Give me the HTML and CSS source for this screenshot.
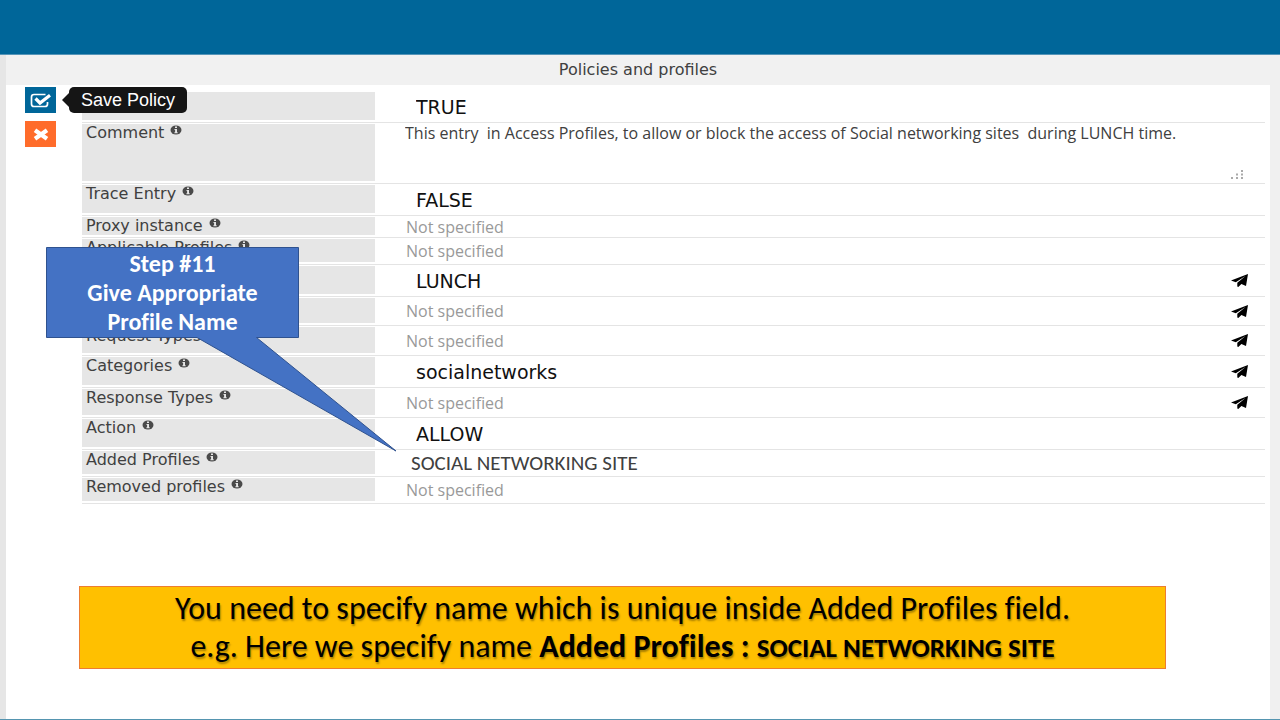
FILE: index.html
```html
<!DOCTYPE html>
<html lang="en">
<head>
<meta charset="utf-8">
<title>Policies and profiles</title>
<link rel="stylesheet" href="styles.css">
</head>
<body>
<svg class="defs" aria-hidden="true">
  <symbol id="info" viewBox="0 0 12 10"><ellipse cx="6" cy="5" rx="5.5" ry="4.6" fill="#4a4a4a"/><path d="M5 1.5h2v1.6H5zM4.5 4H7v3.2h.7v1H4.4v-1h.7V5h-.6z" fill="#e6e6e6"/></symbol>
  <symbol id="plane" viewBox="0 0 17 13"><path d="M17 0 15 12 10.400 10 7.300 13 6.300 12.500V8.800L14.500 2 4.800 8.300 0 6.600Z" fill="#000"/></symbol>
</svg>
<header class="topbar"></header>
<div class="frame">
  <h1 class="title">Policies and profiles</h1>
  <main class="panel">
    <div class="actions">
      <div class="save-wrap">
        <button class="action save" type="button" aria-label="Save Policy" aria-describedby="tip">
          <svg width="22" height="15" viewBox="0 0 22 15"><path d="M15.500 1.500H4Q1.500 1.500 1.500 4v7q0 2.500 2.500 2.500h11q2.500 0 2.500-2.500V9" fill="none" stroke="#fff" stroke-width="1.700"/><path d="m5.500 5.500 4.500 4.500L20 2.300" fill="none" stroke="#fff" stroke-width="3.200"/></svg>
        </button>
        <span class="tooltip" role="tooltip" id="tip">Save Policy</span>
      </div>
      <button class="action cancel" type="button" aria-label="Cancel">
        <svg width="16" height="13" viewBox="0 0 16 13"><path d="m2 2.200 12 8.600M14 2.200 2 10.800" stroke="#fff" stroke-width="4.200"/></svg>
      </button>
    </div>
    <form class="rows">
      <div class="row h32"><label class="label" for="enabled"></label><input class="value" id="enabled" aria-label="Enabled" value="TRUE"></div>
      <div class="row h61"><label class="label" for="comment">Comment <svg class="info"><use href="#info"/></svg></label><textarea class="comment" id="comment">This entry  in Access Profiles, to allow or block the access of Social networking sites  during LUNCH time.</textarea>
        <svg class="grip" width="12" height="10" viewBox="0 0 12 10"><path d="M0 7h2v2H0zM5 7h2v2H5zM10 7h2v2h-2zM5 3.500h2v2H5zM10 3.500h2v2h-2zM10 0h2v2h-2z" fill="#aaa"/></svg></div>
      <div class="row h32"><label class="label" for="trace">Trace Entry <svg class="info"><use href="#info"/></svg></label><input class="value" id="trace" value="FALSE"></div>
      <div class="row h22"><label class="label" for="proxy">Proxy instance <svg class="info"><use href="#info"/></svg></label><input class="value empty" id="proxy" placeholder="Not specified"></div>
      <div class="row h27"><label class="label" for="applicable">Applicable Profiles <svg class="info"><use href="#info"/></svg></label><input class="value empty" id="applicable" placeholder="Not specified"></div>
      <div class="row h32"><label class="label" for="time"></label><input class="value" id="time" aria-label="Time profile" value="LUNCH"><button class="go" type="button" aria-label="Open"><svg class="plane"><use href="#plane"/></svg></button></div>
      <div class="row h29"><label class="label" for="methods"></label><input class="value empty" id="methods" aria-label="Methods" placeholder="Not specified"><button class="go" type="button" aria-label="Open"><svg class="plane"><use href="#plane"/></svg></button></div>
      <div class="row h30"><label class="label" for="request">Request Types</label><input class="value empty" id="request" placeholder="Not specified"><button class="go" type="button" aria-label="Open"><svg class="plane"><use href="#plane"/></svg></button></div>
      <div class="row h32"><label class="label" for="categories">Categories <svg class="info"><use href="#info"/></svg></label><input class="value" id="categories" value="socialnetworks"><button class="go" type="button" aria-label="Open"><svg class="plane"><use href="#plane"/></svg></button></div>
      <div class="row h30"><label class="label" for="response">Response Types <svg class="info"><use href="#info"/></svg></label><input class="value empty" id="response" placeholder="Not specified"><button class="go" type="button" aria-label="Open"><svg class="plane"><use href="#plane"/></svg></button></div>
      <div class="row h32"><label class="label" for="action">Action <svg class="info"><use href="#info"/></svg></label><input class="value" id="action" value="ALLOW"></div>
      <div class="row h27"><label class="label" for="added">Added Profiles <svg class="info"><use href="#info"/></svg></label><input class="value added" id="added" value="SOCIAL NETWORKING SITE"></div>
      <div class="row h27"><label class="label" for="removed">Removed profiles <svg class="info"><use href="#info"/></svg></label><input class="value empty" id="removed" placeholder="Not specified"></div>
    </form>
    <aside class="callout">
      <svg class="tail" width="352" height="206" viewBox="0 0 352 206"><path d="M.5.5h252v90h-42L350 204 151 90.500H.5z" fill="#4472c4" stroke="#2f528f"/></svg>
      <p class="callout-text">Step #11<br>Give Appropriate<br>Profile Name</p>
    </aside>
  </main>
  <p class="note">You need to specify name which is unique inside Added Profiles field.<br>e.g. Here we specify name <b>Added Profiles : <span class="note-name">SOCIAL NETWORKING SITE</span></b></p>
</div>
</body>
</html>
```
FILE: styles.css
```css
* { box-sizing: border-box; }
body {
  margin: 0;
  min-height: 100vh;
  display: flex;
  flex-direction: column;
  background: #fff;
  color: #404040;
  font-family: "Open Sans", sans-serif;
  font-variant-ligatures: none;
  border-bottom: 1px solid #5595b0;
}
button, input, textarea { font: inherit; color: inherit; border: 0; padding: 0; margin: 0; background: none; }
.defs { position: absolute; width: 0; height: 0; }
.topbar { height: 55px; background: #006699; border-bottom: 1px solid #5595b8; }
.frame {
  flex: 1;
  border-left: 6px solid #e6e6e6;
  border-right: 10px solid #f0f0f0;
}
.title {
  margin: 0;
  background: #f1f1f1;
  font: 16px/30px "DejaVu Sans", sans-serif;
  text-align: center;
}
.panel {
  position: relative;
  display: flex;
  gap: 26px;
  padding: 2px 5px 0 19px;
}
.actions { display: flex; flex-direction: column; gap: 8px; width: 31px; }
.save-wrap { position: relative; height: 26px; }
.action { display: flex; align-items: center; justify-content: center; width: 31px; height: 26px; }
.save { background: #006699; }
.cancel { background: #ff6c2b; }
.tooltip {
  position: absolute;
  z-index: 2;
  left: 44px;
  top: 0;
  padding: 0 12px;
  border-radius: 5px;
  background: #151515;
  color: #fff;
  font: 18px/26px "Liberation Sans", sans-serif;
  white-space: nowrap;
}
.tooltip::before {
  content: "";
  position: absolute;
  left: -7px;
  top: 6px;
  border: 7px solid transparent;
  border-left: 0;
  border-right-color: #151515;
}
.rows { flex: 1; min-width: 0; padding-top: 4px; }
.row {
  display: grid;
  grid-template-columns: 293px 1fr 34px;
  column-gap: 30px;
  align-items: center;
  border-bottom: 1px solid #e4e4e4;
}
.h22 { min-height: 22px; }
.h27 { min-height: 27px; }
.h29 { min-height: 29px; }
.h30 { min-height: 30px; }
.h32 { min-height: 32px; }
.h61 { min-height: 61px; }
.label {
  align-self: stretch;
  margin: 1px 0 2px;
  padding-left: 4px;
  background: #e6e6e6;
  font: 16px/17px "DejaVu Sans", sans-serif;
}
.info { width: 12px; height: 10px; margin-left: 1px; vertical-align: 3px; }
.value {
  width: 100%;
  padding-left: 11px;
  color: #111;
  font: 19px/20px "DejaVu Sans", sans-serif;
}
.empty { padding-left: 1px; font: 16px/20px "Open Sans", sans-serif; }
.empty::placeholder { color: #999; }
.added { padding-left: 6px; color: #404040; font: 21px/22px Carlito, Lato, sans-serif; }
.comment {
  align-self: stretch;
  resize: none;
  overflow: hidden;
  font: 16px/20px "Open Sans", sans-serif;
}
.grip { align-self: end; justify-self: start; margin: 0 0 3px; }
.go { display: flex; width: 17px; }
.plane { width: 17px; height: 13px; }
.callout {
  position: absolute;
  left: 40px;
  top: 162px;
  width: 253px;
}
.tail { position: absolute; left: 0; top: 0; }
.callout-text {
  position: relative;
  margin: 0;
  padding-top: 2px;
  color: #fff;
  font: bold 24px/29px Carlito, Lato, sans-serif;
  font-variant-ligatures: none;
  text-align: center;
}
.note {
  margin: 82px 104px 0 73px;
  padding: 3px 0 2px;
  border: 1px solid #ed7d31;
  background: #ffc000;
  color: #000;
  font: 32px/38px Carlito, Lato, sans-serif;
  font-variant-ligatures: none;
  text-align: center;
  text-shadow: 1px 2px 2px rgba(0, 0, 0, .35);
}
.note-name { font-size: 27px; line-height: 30px; }
```
